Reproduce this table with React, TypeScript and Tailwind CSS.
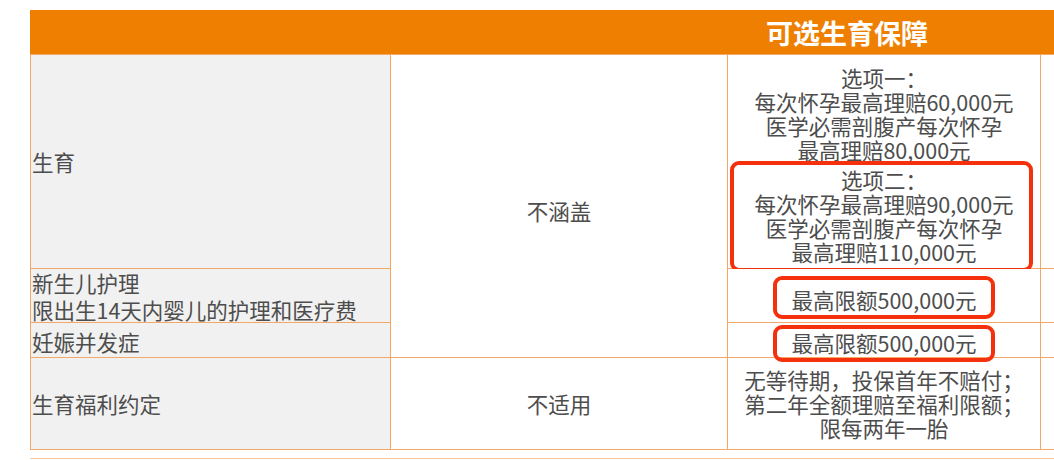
const FONT = { fontFamily: '"Noto Sans CJK SC", "Noto Sans", sans-serif' }

function RedBox({ className }: { className: string }) {
  return (
    <div
      className={
        'pointer-events-none absolute rounded-[9px] border-[4px] border-[#f5300c] ' + className
      }
    />
  )
}

export default function App() {
  const cell = 'bg-white text-[#4d4d4d] text-[21.5px] leading-[24px]'
  const left = 'bg-[#f1f1f1] text-[#4d4d4d] text-[21.5px] leading-[24px] pl-px flex items-center'
  const mid = cell + ' relative flex flex-col items-center justify-center text-center'

  return (
    <div className="w-[1054px] h-[460px] overflow-hidden bg-white pt-[10px]" style={FONT}>
      <div className="ml-[30px] bg-[#f3a868] pl-px pb-px grid grid-cols-[359px_336px_312px_1fr] grid-rows-[44px_213px_53px_34px_91px] gap-px">
        {/* header */}
        <div className="col-span-4 -ml-px bg-[#ef7f01] grid grid-cols-[360px_337px_313px_1fr]">
          <div />
          <div />
          <div className="flex items-center pl-[39px] text-white text-[27px] font-bold leading-none pt-px">
            可选生育保障
          </div>
        </div>

        {/* 生育 */}
        <div className={left}>生育</div>
        <div className={cell + ' row-span-3 flex items-center justify-center pt-[9px]'}>不涵盖</div>
        <div className={mid + ' pt-[6px] gap-[6px]'}>
          <div>
            <div>选项一：</div>
            <div>每次怀孕最高理赔60,000元</div>
            <div>医学必需剖腹产每次怀孕</div>
            <div>最高理赔80,000元</div>
          </div>
          <div className="relative self-stretch">
            <div>选项二：</div>
            <div>每次怀孕最高理赔90,000元</div>
            <div>医学必需剖腹产每次怀孕</div>
            <div>最高理赔110,000元</div>
            <RedBox className="left-[2px] right-[7px] -top-[7px] -bottom-[8px]" />
          </div>
        </div>
        <div className="bg-white" />

        {/* 新生儿护理 */}
        <div className="bg-[#f1f1f1] text-[#4d4d4d] text-[21.5px] leading-[27px] pl-px flex flex-col justify-center">
          <div>新生儿护理</div>
          <div>限出生14天内婴儿的护理和医疗费</div>
        </div>
        <div className={mid + ' pt-[9px]'}>
          <div>最高限额500,000元</div>
          <RedBox className="left-[45px] right-[45px] top-[7px] bottom-[3px]" />
        </div>
        <div className="bg-white" />

        {/* 妊娠并发症 */}
        <div className={left + ' pt-[3px]'}>妊娠并发症</div>
        <div className={mid + ' pt-[5px] z-10'}>
          <div>最高限额500,000元</div>
          <RedBox className="left-[45px] right-[45px] top-[2px] -bottom-[5px]" />
        </div>
        <div className="bg-white" />

        {/* 生育福利约定 */}
        <div className={left}>生育福利约定</div>
        <div className={cell + ' flex items-center justify-center'}>不适用</div>
        <div className={mid}>
          <div>无等待期，投保首年不赔付；</div>
          <div>第二年全额理赔至福利限额；</div>
          <div>限每两年一胎</div>
        </div>
        <div className="bg-white" />
      </div>
      <div className="ml-[30px] mt-[8px] h-px bg-[#f6c9a0]" />
    </div>
  )
}
